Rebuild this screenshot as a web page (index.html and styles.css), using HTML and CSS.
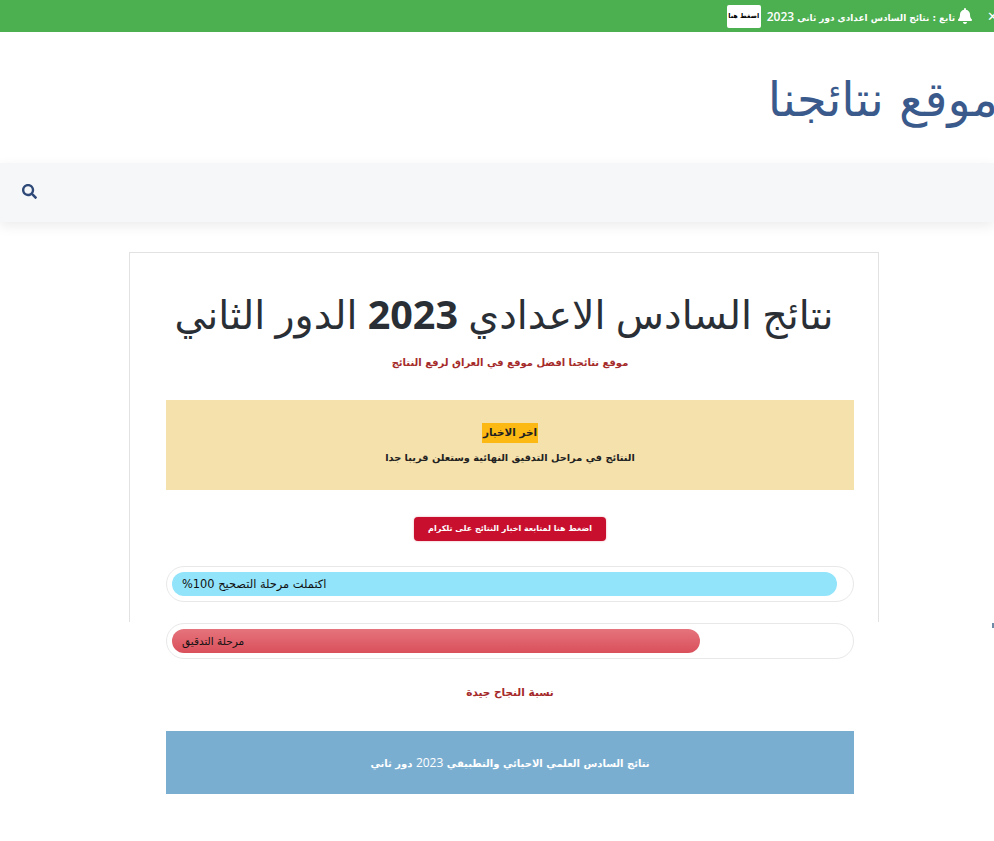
FILE: index.html
```html
<!DOCTYPE html>
<html lang="ar" dir="rtl">
<head>
    <meta charset="UTF-8">
    <meta name="viewport" content="width=device-width, initial-scale=1.0">
    <title>موقع نتائجنا</title>
    <link rel="stylesheet" href="styles.css">
</head>
<body>
    <!-- Top notice -->
    <div class="notice-bar">
        <span class="notice-close">✕</span>
        <svg class="notice-bell" viewBox="0 0 448 512" width="14" height="16"><path fill="currentColor" d="M224 512c35 0 64-29 64-64H160c0 35 29 64 64 64zm215-150c-19-21-55-52-55-154 0-78-54-140-128-155V32a32 32 0 1 0-64 0v21C118 68 64 130 64 208c0 102-36 133-55 154-6 6-9 14-9 22 0 16 13 32 32 32h384c19 0 32-16 32-32 0-8-3-16-9-22z"/></svg>
        <span class="notice-text">تابع : نتائج السادس اعدادي دور ثاني <span class="num">2023</span></span>
        <a class="notice-btn" href="#">اضغط هنا</a>
    </div>

    <header class="site-header">
        <a class="site-title" href="#">موقع نتائجنا</a>
    </header>

    <nav class="main-nav">
        <svg class="search-icon" viewBox="0 0 512 512" width="15" height="15"><path fill="currentColor" d="M505 442.700 405.300 343c-4.500-4.500-10.600-7-17-7H372c27.600-35.300 44-79.700 44-128C416 93.100 322.900 0 208 0S0 93.100 0 208s93.100 208 208 208c48.300 0 92.700-16.400 128-44v16.300c0 6.400 2.500 12.500 7 17l99.700 99.700c9.400 9.400 24.600 9.400 33.900 0l28.300-28.300c9.400-9.400 9.400-24.600.1-34zM208 336c-70.700 0-128-57.200-128-128 0-70.700 57.200-128 128-128 70.700 0 128 57.200 128 128 0 70.700-57.200 128-128 128z"/></svg>
    </nav>

    <main class="card">
        <h1 class="card-title">نتائج السادس الاعدادي <b>2023</b> الدور الثاني</h1>
        <p class="tagline">موقع نتائجنا افضل موقع في العراق لرفع النتائج</p>

        <div class="news-box">
            <p class="news-head"><mark>اخر الاخبار</mark></p>
            <p class="news-body">النتائج في مراحل التدقيق النهائية وستعلن قريبا جدا</p>
        </div>

        <div class="cta-row">
            <a class="cta-btn" href="#">اضغط هنا لمتابعة اخبار النتائج على تلكرام</a>
        </div>

        <div class="progress">
            <div class="progress-bar bar-blue" style="width: 665px"><span>اكتملت مرحلة التصحيح 100%</span></div>
        </div>
        <div class="progress">
            <div class="progress-bar bar-red" style="width: 528px"><span>مرحلة التدقيق</span></div>
        </div>

        <p class="rate-note">نسبة النجاح جيدة</p>

        <a class="result-link" href="#">نتائج السادس العلمي الاحيائي والتطبيقي <span class="num">2023</span> دور ثاني</a>
    </main>

    <span class="edge-mark"></span>
</body>
</html>
```

FILE: styles.css
```css
body {
    position: relative;
    min-height: 841px;
    margin: 0;
    background: white;
    font-family: "DejaVu Sans", sans-serif;
    color: #222;
}

a {
    text-decoration: none;
}

.num {
    font-family: "Open Sans", sans-serif;
}

/* Top notice */
.notice-bar {
    display: flex;
    align-items: center;
    gap: 3px;
    height: 32px;
    background-color: #4caf50;
    color: white;
    font-size: 8.900px;
    font-weight: 700;
}

.notice-close {
    margin-left: 12px;
    margin-right: -4px;
    font-size: 13px;
}

.notice-text .num {
    font-size: 12px;
    font-weight: 600;
}

.notice-btn {
    margin-right: 3px;
    padding: 7px 1.500px;
    background: white;
    color: black;
    font-size: 6.500px;
    line-height: 9px;
    border-radius: 2px;
}

/* Header */
.site-header {
    display: flex;
    align-items: center;
    height: 131px;
    margin-right: -4px;
    overflow: hidden;
}

.site-title {
    margin-top: 4px;
    color: #3b5a8c;
    font-size: 48px;
    line-height: 1.2;
}

.main-nav {
    display: flex;
    justify-content: flex-end;
    align-items: center;
    height: 59px;
    padding-left: 22px;
    background-color: #f5f7f9;
    box-shadow: 0 4px 12px rgba(0,0,0,0.08);
}

.search-icon {
    margin-bottom: 2px;
    color: #2f4a78;
}

/* Main card: fixed height, the content runs past its end */
.card {
    box-sizing: border-box;
    width: 750px;
    height: 370px;
    margin: 30px 115px 0 auto;
    padding: 34px 24px 0 36px;
    background: white;
    border: 1px solid #e2e2e2;
    border-bottom: none;
}

.card-title {
    margin: 0 12px 0 0;
    font-family: "Open Sans", "DejaVu Sans", sans-serif;
    font-size: 39.500px;
    font-weight: 400;
    line-height: 54px;
    text-align: center;
    white-space: nowrap;
    color: #2a2f36;
}

.card-title b {
    font-weight: 700;
}

.tagline {
    margin: 12px 0 0;
    font-size: 10px;
    font-weight: 700;
    line-height: 20px;
    text-align: center;
    color: #a52a2a;
}

.news-box {
    height: 90px;
    margin-top: 27px;
    padding-top: 20px;
    box-sizing: border-box;
    background-color: #f5e1ac;
    font-size: 9.800px;
    font-weight: 700;
    text-align: center;
    color: #222;
}

.news-box p {
    margin: 0;
    line-height: 24px;
}

.news-body {
    padding-top: 2px;
}

.news-head {
    font-size: 10.400px;
}

.news-box mark {
    padding: 3px 1px 5px;
    background-color: #fdb913;
    color: #222;
}

.cta-row {
    display: flex;
    justify-content: center;
    margin-top: 27px;
}

.cta-btn {
    padding: 5px 14px;
    background-color: #c8102e;
    border-radius: 4px;
    box-shadow: 0 0 2px rgba(200,16,46,0.4);
    color: white;
    font-size: 8px;
    font-weight: 700;
    line-height: 14px;
}

.progress {
    box-sizing: border-box;
    height: 36px;
    margin-top: 25px;
    padding: 5px;
    background: white;
    border: 1px solid #e8e8e8;
    border-radius: 18px;
    direction: ltr;
}

.progress + .progress {
    margin-top: 21px;
}

.progress-bar {
    box-sizing: border-box;
    height: 24px;
    padding-left: 10px;
    border-radius: 12px;
    font-size: 11.400px;
    line-height: 24px;
    color: #111;
    white-space: nowrap;
}

.progress-bar span {
    direction: rtl;
    unicode-bidi: embed;
}

.bar-blue {
    background-color: #92e4fb;
}

.bar-red {
    background: linear-gradient(#e5747c, #d9505b);
    font-size: 10.500px;
}

.rate-note {
    margin: 24px 0 0;
    font-size: 10.500px;
    font-weight: 700;
    line-height: 18px;
    text-align: center;
    color: #a52a2a;
}

.result-link {
    display: block;
    height: 63px;
    margin-top: 30px;
    background-color: #7aaed1;
    color: white;
    font-size: 10px;
    font-weight: 700;
    line-height: 63px;
    text-align: center;
}

.result-link .num {
    font-size: 12px;
    font-weight: 400;
}

/* small mark cut by the right edge */
.edge-mark {
    position: absolute;
    top: 623px;
    right: 0;
    width: 2px;
    height: 5px;
    background-color: #6f8aa6;
}
```
